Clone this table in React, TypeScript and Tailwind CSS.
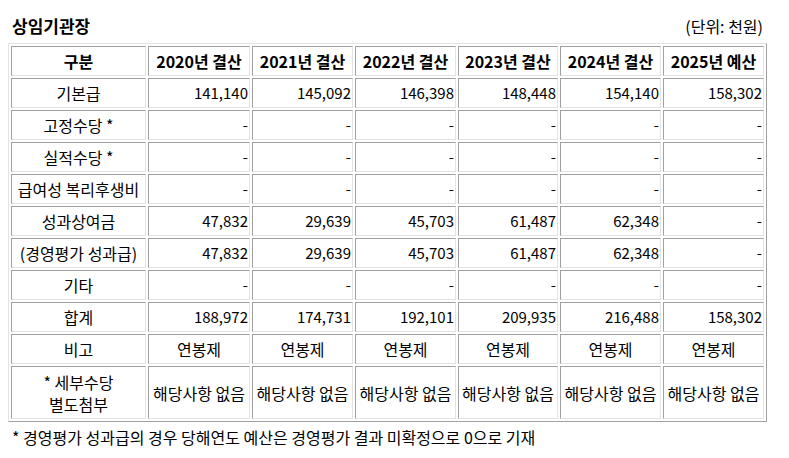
import React from "react";

const years = ["2020년 결산", "2021년 결산", "2022년 결산", "2023년 결산", "2024년 결산", "2025년 예산"];
const colWidths = ["w-[102px]", "w-[101px]", "w-[101px]", "w-[100px]", "w-[101px]", "w-[101px]"];

type Row = { label: React.ReactNode; values: string[]; center?: boolean; tall?: boolean };

const rows: Row[] = [
  { label: "기본급", values: ["141,140", "145,092", "146,398", "148,448", "154,140", "158,302"] },
  { label: "고정수당 *", values: ["-", "-", "-", "-", "-", "-"] },
  { label: "실적수당 *", values: ["-", "-", "-", "-", "-", "-"] },
  { label: "급여성 복리후생비", values: ["-", "-", "-", "-", "-", "-"] },
  { label: "성과상여금", values: ["47,832", "29,639", "45,703", "61,487", "62,348", "-"] },
  { label: "(경영평가 성과급)", values: ["47,832", "29,639", "45,703", "61,487", "62,348", "-"] },
  { label: "기타", values: ["-", "-", "-", "-", "-", "-"] },
  { label: "합계", values: ["188,972", "174,731", "192,101", "209,935", "216,488", "158,302"] },
  { label: "비고", values: ["연봉제", "연봉제", "연봉제", "연봉제", "연봉제", "연봉제"], center: true },
  {
    label: (
      <>
        * 세부수당
        <br />
        별도첨부
      </>
    ),
    values: Array(6).fill("해당사항 없음"),
    center: true,
    tall: true,
  },
];

const cell = "border border-t-[#a0a0a0] border-l-[#a0a0a0] border-b-[#e3e3e3] border-r-[#e3e3e3] p-0 align-middle";

export default function App() {
  return (
    <div
      className="bg-white text-black pt-[16px] pl-[8px] w-[789px] h-[458px]"
      style={{ fontFamily: '"Noto Sans CJK KR", "Noto Sans", sans-serif' }}
    >
      <div className="flex w-[759px] items-end justify-between">
        <h2 className="pl-[4px] text-[17px] font-bold leading-[20px]">상임기관장</h2>
        <span className="pr-[4px] text-[16px] leading-[20px]">(단위: 천원)</span>
      </div>

      <table className="mt-[7px] w-[759px] table-fixed border-separate border-spacing-[2px] border border-t-[#e3e3e3] border-l-[#e3e3e3] border-b-[#a0a0a0] border-r-[#a0a0a0] text-[16px] leading-[22px]">
        <thead>
          <tr className="h-[30px]">
            <th className={`${cell} w-[135px] font-bold text-center`}>구분</th>
            {years.map((y, i) => (
              <th key={y} className={`${cell} ${colWidths[i]} font-bold text-center whitespace-nowrap`}>
                {y}
              </th>
            ))}
          </tr>
        </thead>
        <tbody>
          {rows.map((r, i) => (
            <tr key={i} className={r.tall ? "h-[53px]" : "h-[30px]"}>
              <td className={`${cell} text-center whitespace-nowrap`}>{r.label}</td>
              {r.values.map((v, j) => (
                <td
                  key={j}
                  className={`${cell} whitespace-nowrap ${r.center ? "text-center" : "text-right pr-[1px] text-[15px]"}`}
                >
                  {v}
                </td>
              ))}
            </tr>
          ))}
        </tbody>
      </table>

      <p className="mt-[5px] pl-[4px] text-[16px] leading-[20px]">
        * 경영평가 성과급의 경우 당해연도 예산은 경영평가 결과 미확정으로 0으로 기재
      </p>
    </div>
  );
}
